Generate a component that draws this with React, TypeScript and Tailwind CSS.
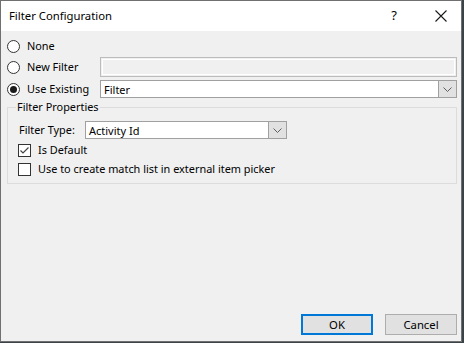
import React from 'react';

const font = { fontFamily: '"Segoe UI", "Noto Sans", "Liberation Sans", sans-serif' };

const Radio = ({ checked }: { checked?: boolean }) => (
  <span className="w-[13px] h-[13px] rounded-full border border-[#333333] bg-white flex items-center justify-center shrink-0">
    {checked && <span className="w-[7px] h-[7px] rounded-full bg-[#1a1a1a]" />}
  </span>
);

const Checkbox = ({ checked }: { checked?: boolean }) => (
  <span className="w-[13px] h-[13px] border border-[#333333] bg-white flex items-center justify-center shrink-0">
    {checked && (
      <svg width="11" height="11" viewBox="0 0 11 11">
        <path d="M1.5 5.5 L4 8 L9.5 2.5" fill="none" stroke="#444444" strokeWidth="1.2" />
      </svg>
    )}
  </span>
);

const Chevron = () => (
  <svg width="9" height="5" viewBox="0 0 9 5">
    <path d="M0.5 0.5 L4.5 4.5 L8.5 0.5" fill="none" stroke="#606060" strokeWidth="1" />
  </svg>
);

const Combo = ({ value, className }: { value: string; className: string }) => (
  <div className={`flex h-[18px] border border-[#a0a0a0] bg-white ${className}`}>
    <span className="flex-1 flex items-center pl-[3px] text-[11px] text-black leading-none">{value}</span>
    <span className="w-[18px] h-full bg-[#e1e1e1] border-l border-[#a0a0a0] flex items-center justify-center">
      <Chevron />
    </span>
  </div>
);

export default function App() {
  return (
    <div className="w-[464px] h-[343px] bg-[#3a4448] overflow-hidden" style={font}>
      <div className="w-[462px] h-[342px] border border-[#707070] bg-[#f0f0f0] flex flex-col text-[10.9px] text-black">
        {/* title bar */}
        <div className="h-[30px] bg-white flex items-center shrink-0">
          <span className="pl-[8px] flex-1 text-[11.3px]">Filter Configuration</span>
          <span className="w-[14px] text-[13px] mr-[34px] text-center">?</span>
          <span className="mr-[14px] flex items-center">
            <svg width="12" height="12" viewBox="0 0 12 12">
              <path d="M0.5 0.5 L11.5 11.5 M11.5 0.5 L0.5 11.5" stroke="#1a1a1a" strokeWidth="1.1" />
            </svg>
          </span>
        </div>

        {/* body */}
        <div className="flex-1 flex flex-col pt-[7px]">
          <div className="h-[16px] flex items-center pl-[6px] gap-[7px]">
            <Radio />
            <span>None</span>
          </div>
          <div className="h-[20px] mt-[3px] flex items-center pl-[6px]">
            <Radio />
            <span className="ml-[7px] w-[73px]">New Filter</span>
            <div className="w-[357px] h-[20px] border border-[#bcbcbc] bg-[#f0f0f0] p-px">
              <div className="w-full h-full border border-white" />
            </div>
          </div>
          <div className="h-[18px] mt-[3px] flex items-center pl-[6px]">
            <Radio checked />
            <span className="ml-[7px] w-[73px]">Use Existing</span>
            <Combo value="Filter" className="w-[357px]" />
          </div>

          <fieldset className="ml-[6px] mt-[1px] w-[450px] border border-[#dcdcdc] pl-[11px] pb-[7px]">
            <legend className="ml-[-3px] px-[1px] leading-[16px]">Filter Properties</legend>
            <div className="flex items-center mt-[6px]">
              <span className="w-[66px]">Filter Type:</span>
              <Combo value="Activity Id" className="w-[202px]" />
            </div>
            <div className="flex items-center h-[13px] mt-[5px] gap-[7px] -ml-[1px]">
              <Checkbox checked />
              <span>Is Default</span>
            </div>
            <div className="flex items-center h-[13px] mt-[6px] gap-[7px] -ml-[1px]">
              <Checkbox />
              <span>Use to create match list in external item picker</span>
            </div>
          </fieldset>

          <div className="mt-auto mb-[6px] flex justify-end gap-[12px] pr-[4px]">
            <button className="w-[72px] h-[21px] border-2 border-[#0078d7] bg-[#e1e1e1] text-[11.3px] leading-none">
              OK
            </button>
            <button className="w-[72px] h-[21px] border border-[#adadad] bg-[#e1e1e1] text-[11.3px] leading-none">
              Cancel
            </button>
          </div>
        </div>
      </div>
    </div>
  );
}
